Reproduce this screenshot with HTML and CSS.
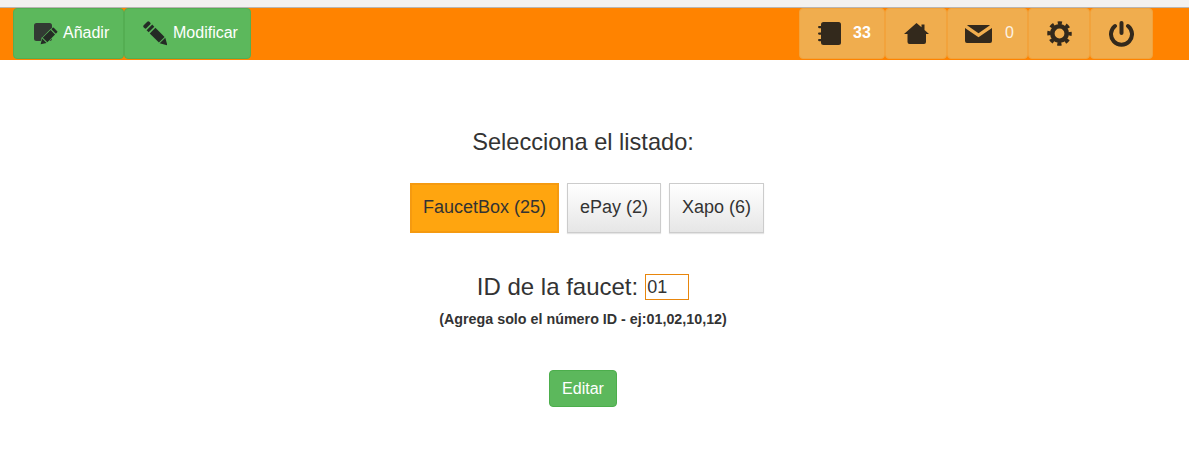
FILE: index.html
```html
<!DOCTYPE html>
<html lang="es">
  <head>
    <meta charset="UTF-8" />
    <meta name="viewport" content="width=device-width, initial-scale=1.0" />
    <link rel="stylesheet" href="styles.css">
    <title>Editar faucet</title>
  </head>
  <body>
    <div class="topline"></div>
    <nav class="navbar">
      <div class="nav-group">
        <a class="nav-btn green add">
          <svg class="add-icon" width="26" height="25" viewBox="0 0 26 25">
            <rect fill="#323a33" x="0" y="0" width="18" height="18" rx="2.500" />
            <g fill="#242b25" stroke="#5cb85c" stroke-width="1.200" paint-order="stroke" transform="translate(21.500 6.500) rotate(45)">
              <rect x="-3.200" y="0" width="6.400" height="2.800" rx="0.800" />
              <rect x="-3.200" y="3.800" width="6.400" height="11" />
              <path d="M-3.200 15.800h6.400L0 21z" />
            </g>
          </svg>
          <span class="label">Añadir</span>
        </a>
        <a class="nav-btn green edit">
          <svg width="25" height="26" viewBox="0 0 25 26">
            <g fill="#242b25" transform="translate(3.500 2.500) rotate(-45)">
              <rect x="-4" y="0" width="8" height="4" rx="1.500" />
              <rect x="-4" y="5.500" width="8" height="3" />
              <rect x="-4" y="10" width="8" height="13" />
              <path d="M-4 24h8L0 31z" />
            </g>
          </svg>
          <span class="label">Modificar</span>
        </a>
      </div>
      <div class="nav-group">
        <a class="nav-btn orange book">
          <svg width="23" height="23" viewBox="0 0 23 23">
            <rect fill="#33291c" x="3" y="0" width="20" height="23" rx="2.500" />
            <rect fill="#33291c" x="0" y="4" width="5" height="2.200" rx="1.100" />
            <rect fill="#33291c" x="0" y="10.500" width="5" height="2.200" rx="1.100" />
            <rect fill="#33291c" x="0" y="17" width="5" height="2.200" rx="1.100" />
          </svg>
          <b class="label">33</b>
        </a>
        <a class="nav-btn orange home">
          <svg width="25" height="21" viewBox="0 0 25 21">
            <path fill="#33291c" d="M12.500 0l5 4.300V1.500h3v5.400l4.500 4.100h-3v8a2 2 0 0 1-2 2H5.500a2 2 0 0 1-2-2v-8H0z" />
          </svg>
        </a>
        <a class="nav-btn orange mail">
          <svg width="27" height="18" viewBox="0 0 27 18">
            <path fill="#33291c" d="M3 0h21l1 .3-11.500 8L2 .3zM0 3l13.500 9.200L27 3v13a2 2 0 0 1-2 2H2a2 2 0 0 1-2-2z" />
          </svg>
          <span class="label unread">0</span>
        </a>
        <a class="nav-btn orange gear">
          <svg width="25" height="25" viewBox="0 0 25 25">
            <circle cx="12.500" cy="12.500" r="7.200" fill="none" stroke="#33291c" stroke-width="4.600" />
            <circle cx="12.500" cy="12.500" r="10.500" fill="none" stroke="#33291c" stroke-width="3.500" stroke-dasharray="4.200 4.050" stroke-dashoffset="2.100" />
          </svg>
        </a>
        <a class="nav-btn orange power">
          <svg width="25" height="26" viewBox="0 0 25 26">
            <path fill="none" stroke="#33291c" stroke-width="4" stroke-linecap="round" d="M6 5a10.500 10.500 0 1 0 13 0" />
            <path fill="none" stroke="#33291c" stroke-width="4" stroke-linecap="round" d="M12.500 2v10" />
          </svg>
        </a>
      </div>
    </nav>

    <main class="content">
      <h2 class="title">Selecciona el listado:</h2>
      <div class="lists">
        <a class="list-btn active">FaucetBox (25)</a>
        <a class="list-btn">ePay (2)</a>
        <a class="list-btn">Xapo (6)</a>
      </div>
      <label class="id-row">
        ID de la faucet:
        <input class="id-input" type="text" value="01" />
      </label>
      <p class="hint">(Agrega solo el número ID - ej:01,02,10,12)</p>
      <button class="submit">Editar</button>
    </main>
  </body>
</html>
```

FILE: styles.css
```css
* {
  margin: 0;
  padding: 0;
  box-sizing: border-box;
}
body {
  font-family: "Liberation Sans", Arial, sans-serif;
  color: #333;
  background: #fff;
}
.topline {
  height: 8px;
  background: #f3f1f0;
  border-bottom: 1px solid #b9b5b2;
}
.navbar {
  height: 52px;
  background: #ff8300;
  display: flex;
  justify-content: space-between;
  padding: 0 36px 0 13px;
}
.nav-group {
  display: flex;
}
.nav-btn {
  height: 51px;
  display: flex;
  align-items: center;
  border-radius: 4px;
  font-size: 16px;
  color: #fff;
}
.label {
  margin-bottom: 2px;
}
.green {
  background: #5cb85c;
  border: 1px solid #54ae52;
}
.orange {
  background: #f0ad4e;
  border: 1px solid #f2a33c;
  justify-content: center;
}
.add {
  width: 111px;
  padding-left: 20px;
  gap: 3px;
}
.add-icon {
  margin-top: 3px;
}
.edit {
  width: 127px;
  padding-left: 17px;
  gap: 6px;
}
.book {
  width: 86px;
  justify-content: flex-start;
  padding-left: 18px;
  gap: 12px;
}
.home {
  width: 62px;
}
.mail {
  width: 81px;
  justify-content: flex-start;
  padding-left: 17px;
  gap: 13px;
}
.gear {
  width: 62px;
}
.power {
  width: 63px;
}
.unread {
  opacity: 0.85;
}
.content {
  display: flex;
  flex-direction: column;
  align-items: center;
  margin-left: -23px;
}
.title {
  margin-top: 68px;
  font-size: 23.6px;
  font-weight: 400;
  line-height: 28px;
}
.lists {
  display: flex;
  gap: 8px;
  margin-top: 27px;
  margin-left: 8px;
}
.list-btn {
  height: 50px;
  display: flex;
  align-items: center;
  padding: 0 12px 2px;
  font-size: 18px;
  color: #333;
  background: linear-gradient(#fff, #e6e6e6);
  border: 1px solid #ccc;
  box-shadow: 0 1px 1px rgba(0, 0, 0, 0.1);
}
.active {
  padding: 0 11px 2px;
  background: #ffa50f;
  border: 2px solid #f59a10;
  box-shadow: none;
}
.id-row {
  margin-top: 40px;
  font-size: 24px;
  line-height: 28px;
  display: flex;
  align-items: center;
  gap: 7px;
}
.id-input {
  width: 44px;
  height: 26px;
  border: 1px solid #e8860c;
  font-family: "Liberation Sans", Arial, sans-serif;
  font-size: 18px;
  color: #333;
  padding: 0 1px;
  outline: none;
}
.hint {
  margin-top: 10px;
  font-size: 14.3px;
  font-weight: 700;
  line-height: 16px;
}
.submit {
  margin-top: 43px;
  width: 68px;
  height: 37px;
  background: #5cb85c;
  border: 1px solid #4cae4c;
  border-radius: 4px;
  color: #fff;
  font-family: "Liberation Sans", Arial, sans-serif;
  font-size: 16px;
}
```
